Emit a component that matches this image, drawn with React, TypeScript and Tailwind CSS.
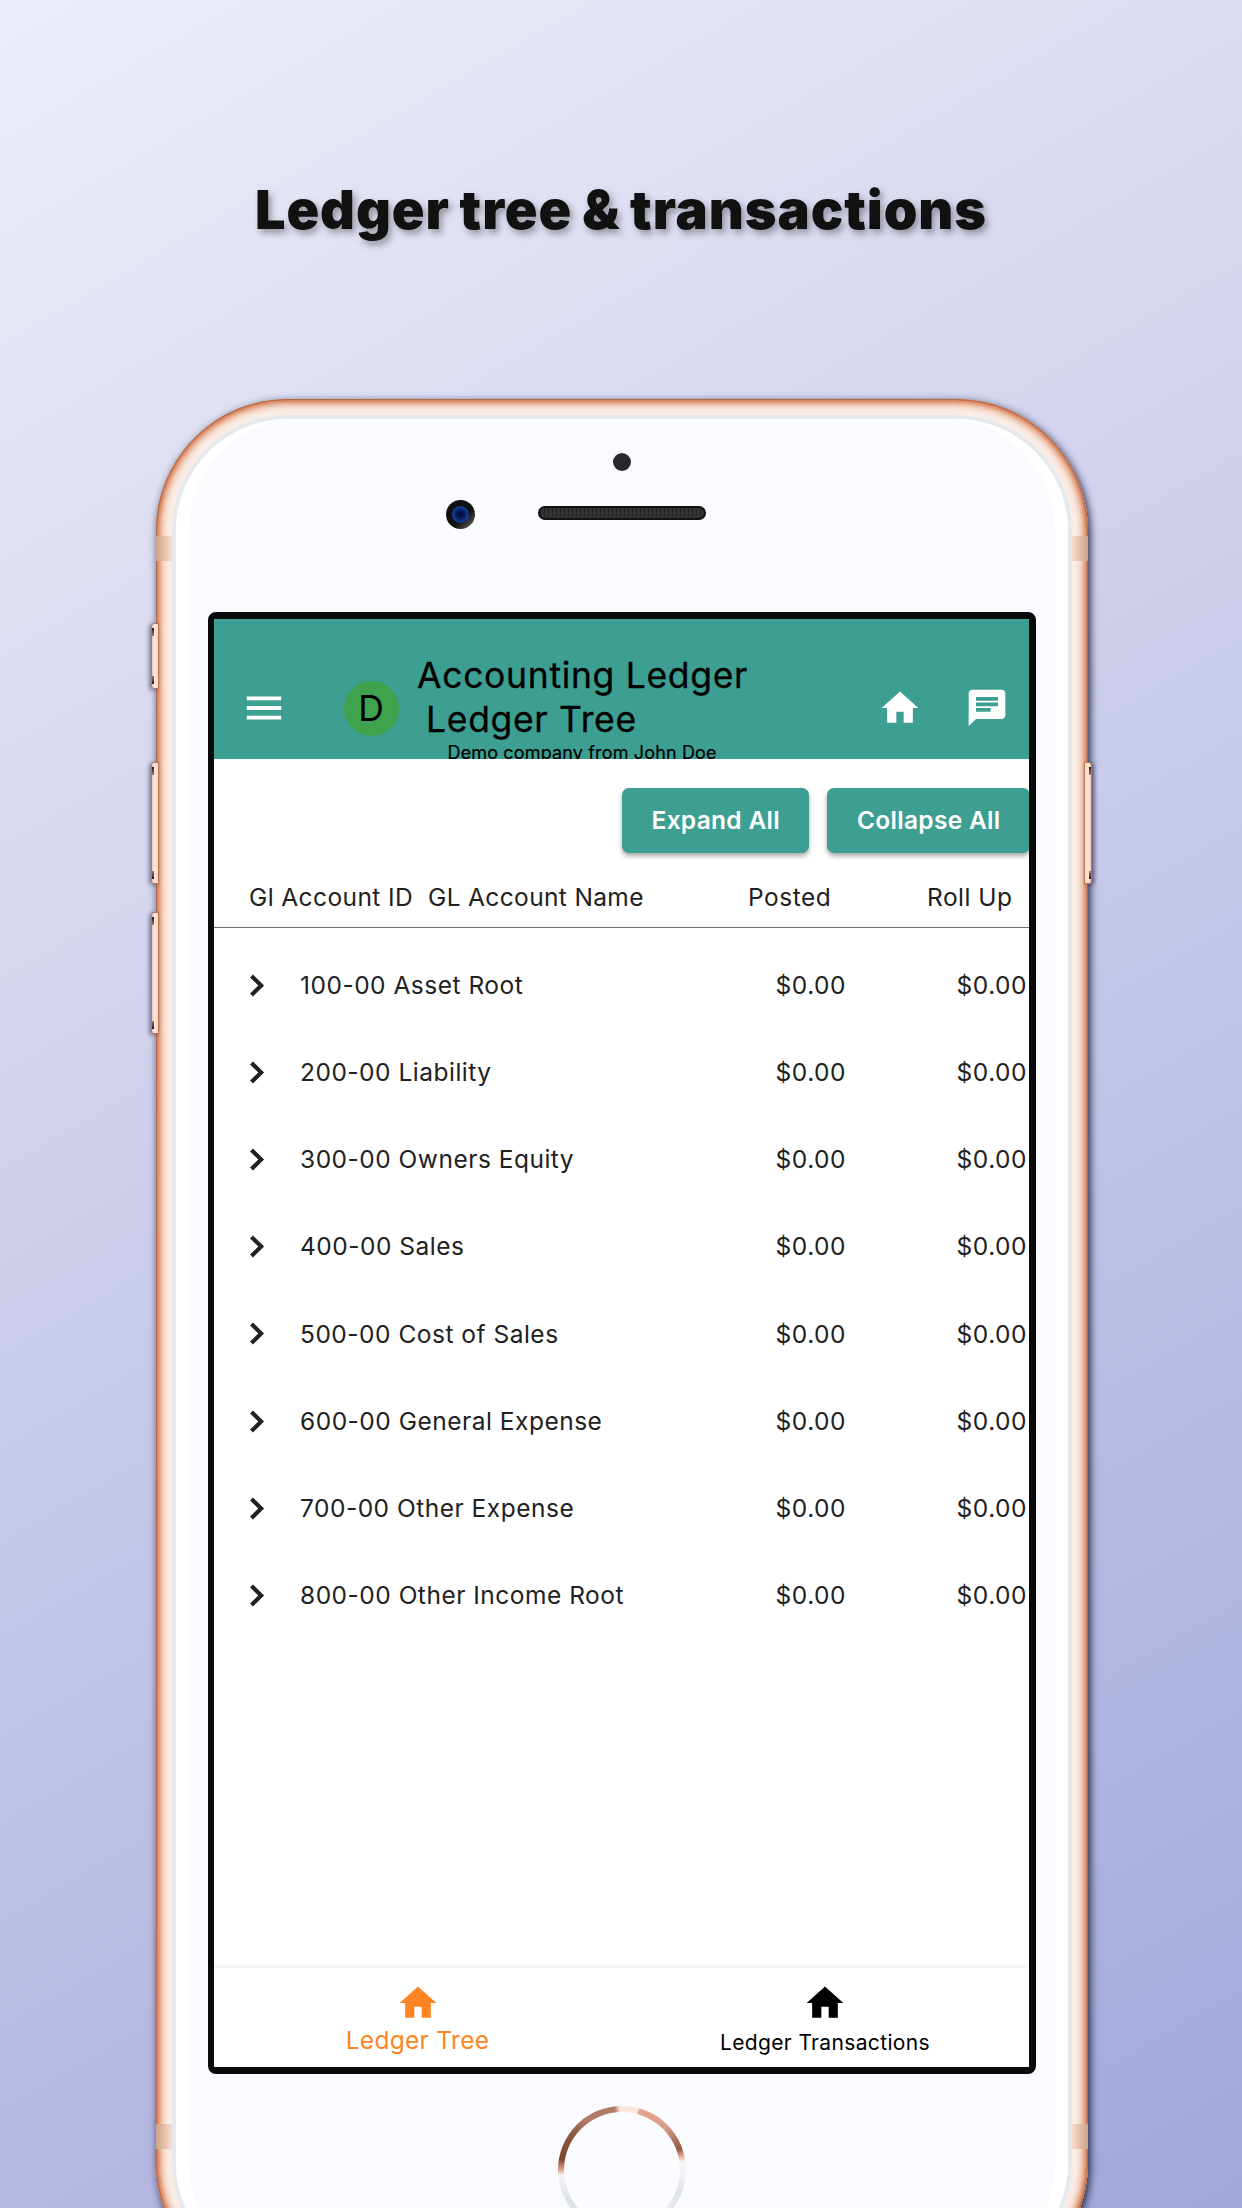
import type { ReactNode } from "react";
import { MdChat, MdHome, MdMenu } from "react-icons/md";

const accounts = [
  "100-00 Asset Root",
  "200-00 Liability",
  "300-00 Owners Equity",
  "400-00 Sales",
  "500-00 Cost of Sales",
  "600-00 General Expense",
  "700-00 Other Expense",
  "800-00 Other Income Root",
];

function ActionButton({ children }: { children: ReactNode }) {
  return (
    <button className="h-[65px] shrink-0 whitespace-nowrap rounded-[7px] bg-[#3c9f91] px-[29.5px] text-[24.5px] font-semibold tracking-[0.3px] text-white shadow-[0_3px_5px_rgba(0,0,0,0.35)]">
      {children}
    </button>
  );
}

function ChevronRight({ className }: { className: string }) {
  return (
    <svg viewBox="0 0 24 24" className={className} fill="none" stroke="currentColor" strokeWidth="2.3">
      <path d="M9.2 6.7 14.6 12l-5.4 5.3" />
    </svg>
  );
}

function SideKey({ className }: { className: string }) {
  return (
    <div
      className={`absolute w-[8px] rounded-l-[3px] border border-[#b9745c] bg-linear-to-r from-[#f3c5b4] via-[#ffe4d6] via-40% to-[#ffdcc6] shadow-[-2px_1px_4px_rgba(20,25,60,0.45)] ${className}`}
    >
      <div className="absolute left-0 top-[4px] h-[8px] w-[2px] bg-linear-to-b from-[#2a1512] to-[#b9745c]" />
      <div className="absolute bottom-[4px] left-0 h-[8px] w-[2px] bg-linear-to-t from-[#2a1512] to-[#b9745c]" />
    </div>
  );
}

function Antenna({ className }: { className: string }) {
  return <div className={`absolute h-[25px] w-[16px] ${className}`} />;
}

function AppBar() {
  return (
    <header className="flex h-[140px] shrink-0 items-start overflow-hidden bg-[#3c9f91] text-black">
      <MdMenu className="ml-[27px] mt-[66px] size-[46px] shrink-0 text-white" />
      <div className="ml-[56.5px] mt-[62px] flex size-[55px] shrink-0 items-center justify-center rounded-full bg-[#3fa34d] text-[35.5px]">
        D
      </div>
      <div className="ml-[18.5px] mt-[35px] flex w-[461px] shrink-0 flex-col whitespace-nowrap">
        <div className="text-[35.5px] leading-[43.5px] tracking-[0.68px] [-webkit-text-stroke:0.3px_#000]">Accounting Ledger</div>
        <div className="pl-[9px] text-[35.5px] leading-[43.5px] tracking-[0.68px] [-webkit-text-stroke:0.3px_#000]">Ledger Tree</div>
        <div className="h-[18px] pl-[30.5px] text-[18px] leading-[24px] tracking-[0.15px] [-webkit-text-stroke:0.2px_#000]">Demo company from John Doe</div>
      </div>
      <MdHome className="mt-[67px] size-[44px] shrink-0 text-white" />
      <MdChat className="ml-[43px] mt-[67px] size-[44px] shrink-0 text-white" />
    </header>
  );
}

function LedgerTable() {
  return (
    <div className="text-[24.5px] tracking-[0.5px] text-[#212121]">
      <div className="grid h-[62px] grid-cols-[179px_320px_179px_137px] items-center whitespace-nowrap border-b border-[#6e6e6e] pl-[35px] pt-[2px]">
        <div className="tracking-[0.4px]">Gl Account ID</div>
        <div className="tracking-[0.36px]">GL Account Name</div>
        <div>Posted</div>
        <div>Roll Up</div>
      </div>
      <div className="pt-[14px]">
        {accounts.map((name) => (
          <div key={name} className="flex h-[87.1px] items-center whitespace-nowrap">
            <ChevronRight className="ml-[21px] size-[43px] shrink-0" />
            <div className="ml-[22px] w-[415px] shrink-0">{name}</div>
            <div className="w-[131px] shrink-0 text-right">$0.00</div>
            <div className="w-[181px] shrink-0 text-right">$0.00</div>
          </div>
        ))}
      </div>
    </div>
  );
}

function BottomNav() {
  return (
    <nav className="flex h-[99px] shrink-0 bg-white shadow-[0_-1px_5px_rgba(0,0,0,0.09)]">
      <div className="flex w-[408px] flex-col items-center pt-[13px] text-[#ff8522]">
        <MdHome className="size-[44px]" />
        <div className="text-[24.5px] leading-[30px] tracking-[0.3px]">Ledger Tree</div>
      </div>
      <div className="flex w-[409px] flex-col items-center pt-[13px] text-black">
        <MdHome className="size-[44px]" />
        <div className="mt-[3px] text-[21px] leading-[30px] tracking-[0.35px]">Ledger Transactions</div>
      </div>
    </nav>
  );
}

function Screen() {
  return (
    <div className="flex h-[1462px] w-[828px] flex-col overflow-hidden rounded-[8px] border-[6px] border-b-[7px] border-r-[7px] border-t-[7px] border-[#0a0a0a] bg-white">
      <AppBar />
      <div className="flex h-[107px] shrink-0 gap-[18px] overflow-hidden pl-[408px] pt-[29px]">
        <ActionButton>Expand All</ActionButton>
        <ActionButton>Collapse All</ActionButton>
      </div>
      <LedgerTable />
      <div className="flex-1" />
      <BottomNav />
    </div>
  );
}

function HomeButton() {
  return (
    <div className="mt-[32px] size-[128px] rounded-full bg-[conic-gradient(from_0deg,#fbe5de_0deg_14deg,#e6a48e_17deg,#d99f8b_45deg,#935a43_70deg,#f0b7a5_78deg,#f3f3f3_82deg_95deg,#dfe2e2_110deg,#f3f3f3_140deg,#f1c4b5_160deg,#e8e8e8_200deg,#dfe2e2_240deg,#f3f3f3_265deg,#e6a48e_270deg,#7d4931_280deg,#8b573f_305deg,#b27b68_325deg,#b27b68_353deg,#fbe5de_358deg)] p-[6px]">
      <div className="size-full rounded-full bg-[#fbfcff]" />
    </div>
  );
}

function Phone() {
  return (
    <div className="relative ml-[2px] h-[1896px] w-[932px] shrink-0">
      <div className="relative h-full rounded-[132px] bg-[#f9ece5] p-[16px] shadow-[inset_0_0_0_1px_#b4694a,inset_0_0_2px_2px_#d17f5a,inset_0_0_3px_4px_#df9674,inset_0_0_4px_6px_#ecb99f,inset_0_0_4px_9px_#f5d8c8,2px_3px_9px_rgba(10,15,40,0.9)]">
        <Antenna className="left-0 top-[137px] bg-linear-to-r from-[#cda28a] to-[#fbdccd]" />
        <Antenna className="right-0 top-[137px] bg-linear-to-l from-[#cda28a] to-[#fbdccd]" />
        <Antenna className="left-0 top-[1725px] bg-linear-to-r from-[#cda28a] to-[#fbdccd]" />
        <Antenna className="right-0 top-[1725px] bg-linear-to-l from-[#cda28a] to-[#fbdccd]" />
        <div className="h-full rounded-[116px] bg-white p-[4px] shadow-[inset_0_0_0_4px_#e6e9eb]">
          <div className="h-full overflow-hidden rounded-[112px] bg-white px-[13px]">
            <div className="flex h-full flex-col items-center rounded-[110px] bg-[#f9fbff]">
              <div className="mt-[34px] size-[18px] rounded-full bg-[#29292b]" />
              <div className="mt-[28px] flex h-[29px] w-full items-center">
                <div className="ml-[257px] mt-[1px] flex size-[29px] shrink-0 items-center justify-center rounded-full bg-linear-to-br from-[#111] from-60% to-[#777]">
                  <div className="size-[17px] rounded-full bg-[radial-gradient(circle_at_50%_50%,#020f45_20%,#123f96_65%,#0b2354)]" />
                </div>
                <div className="mb-[2px] ml-[63px] h-[14px] w-[168px] rounded-full border-2 border-[#111] bg-[#333] bg-[repeating-linear-gradient(90deg,#222_0_1px,transparent_1px_4px)]" />
              </div>
              <div className="mt-[84px]">
                <Screen />
              </div>
              <HomeButton />
            </div>
          </div>
        </div>
      </div>
      <SideKey className="-left-[5px] top-[224px] h-[66px]" />
      <SideKey className="-left-[5px] top-[363px] h-[122px]" />
      <SideKey className="-left-[5px] top-[513px] h-[122px]" />
      <SideKey className="-right-[4px] top-[363px] h-[122px] -scale-x-100" />
    </div>
  );
}

export default function App() {
  return (
    <main className="flex h-[2208px] w-[1242px] flex-col items-center overflow-hidden bg-[linear-gradient(150deg,#ebedf8_0%,#d3d4ef_36%,#a1a7da_100%)] font-['Inter',sans-serif]">
      <h1 className="mt-[174px] h-[225px] shrink-0 whitespace-nowrap text-[54px] font-black leading-[72px] tracking-[0.95px] text-[#111] [text-shadow:3px_4px_7px_rgba(0,0,0,0.35)] [word-spacing:-2px]">
        Ledger tree &amp; transactions
      </h1>
      <Phone />
    </main>
  );
}
